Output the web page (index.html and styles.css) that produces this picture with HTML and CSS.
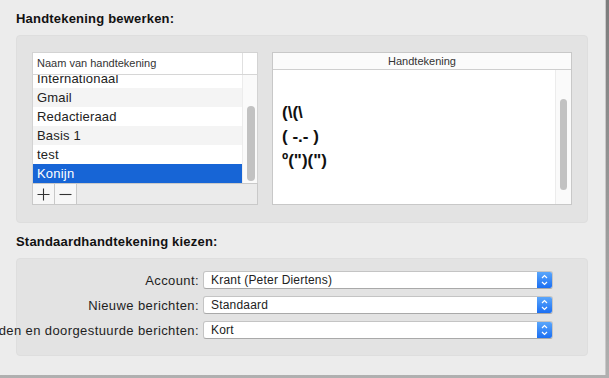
FILE: index.html
```html
<!DOCTYPE html>
<html lang="nl">
<head>
  <meta charset="UTF-8">
  <title>Handtekeningen</title>
  <link rel="stylesheet" href="styles.css">
</head>
<body>
  <div class="window">
    <h2 class="section-title">Handtekening bewerken:</h2>
    <div class="group edit-group">
      <div class="sig-list">
        <div class="list-header">
          <span class="col-name">Naam van handtekening</span>
          <span class="col-pad"></span>
        </div>
        <div class="list-body">
          <div class="rows">
            <div class="row">Internationaal</div>
            <div class="row alt">Gmail</div>
            <div class="row">Redactieraad</div>
            <div class="row alt">Basis 1</div>
            <div class="row">test</div>
            <div class="row selected">Konijn</div>
          </div>
          <div class="scroller list-scroller"><div class="thumb"></div></div>
        </div>
        <div class="list-buttons">
          <button class="sq-btn" aria-label="Toevoegen">
            <svg width="13" height="13" viewBox="0 0 13 13"><path d="M6.5 0.5v12M0.5 6.5h12" stroke="#333" stroke-width="1.1" fill="none"/></svg>
          </button>
          <button class="sq-btn" aria-label="Verwijderen">
            <svg width="13" height="13" viewBox="0 0 13 13"><path d="M0.5 6.5h12" stroke="#333" stroke-width="1.1" fill="none"/></svg>
          </button>
        </div>
      </div>

      <div class="sig-preview">
        <div class="preview-header">Handtekening</div>
        <div class="preview-body">
          <div class="preview-text">
            <div>(\(\</div>
            <div>( -.- )</div>
            <div>º(")(")</div>
          </div>
          <div class="scroller preview-scroller"><div class="thumb"></div></div>
        </div>
      </div>
    </div>

    <h2 class="section-title">Standaardhandtekening kiezen:</h2>
    <div class="group choose-group">
      <div class="form-row">
        <label class="form-label">Account:</label>
        <div class="popup"><span>Krant (Peter Diertens)</span><span class="stepper"></span></div>
      </div>
      <div class="form-row">
        <label class="form-label">Nieuwe berichten:</label>
        <div class="popup"><span>Standaard</span><span class="stepper"></span></div>
      </div>
      <div class="form-row">
        <label class="form-label">Antwoorden en doorgestuurde berichten:</label>
        <div class="popup"><span>Kort</span><span class="stepper"></span></div>
      </div>
    </div>
  </div>
</body>
</html>
```

FILE: styles.css
```css
/* Base */
html, body {
  margin: 0;
  width: 100%;
  height: 100%;
  overflow: hidden;
}

body {
  font-family: "Liberation Sans", Arial, sans-serif;
  color: #1e1e1e;
  background: linear-gradient(180deg, #7c7c7c, #b0b0b0);
}

.window {
  width: 606px;
  height: 375px;
  box-sizing: border-box;
  background: #ececec;
  border-right: 1px solid #c9c9c9;
  padding: 11px 0 0 16px;
}

.section-title {
  margin: 0 0 8px;
  font-size: 13px;
  line-height: 16px;
  font-weight: bold;
  letter-spacing: 0.2px;
  color: #111;
}

.group {
  width: 572px;
  box-sizing: border-box;
  background: #e3e3e3;
  border: 1px solid #dedede;
  border-radius: 4px;
}

/* Edit group */
.edit-group {
  display: flex;
  gap: 14px;
  padding: 16px 15px 17px 15px;
  margin-bottom: 11px;
}

.sig-list {
  width: 226px;
  display: flex;
  flex-direction: column;
}

.list-header {
  display: flex;
  height: 21px;
  background: #fff;
  border: 1px solid #d3d3d3;
  border-bottom-color: #d6d6d6;
  box-sizing: content-box;
}

.col-name {
  flex: 1;
  font-size: 11px;
  line-height: 21px;
  padding-left: 4px;
  color: #333;
  border-right: 1px solid #e0e0e0;
}

.col-pad {
  width: 14px;
}

.list-body {
  display: flex;
  height: 108px;
  background: #fff;
  border-left: 1px solid #d3d3d3;
  border-right: 1px solid #d3d3d3;
  overflow: hidden;
}

.rows {
  flex: 1;
  margin-top: -6px;
}

.row {
  height: 19px;
  line-height: 19px;
  font-size: 13px;
  letter-spacing: 0.2px;
  padding-left: 4px;
  color: #222;
}

.row.alt {
  background: #f4f4f4;
}

.row.selected {
  background: #1765d6;
  color: #fff;
}

.scroller {
  background: #fafafa;
  border-left: 1px solid #ececec;
  box-sizing: border-box;
}

.list-scroller {
  width: 15px;
  padding: 31px 2px 0 4px;
}

.thumb {
  background: #c2c2c2;
  border-radius: 4px;
}

.list-scroller .thumb {
  height: 75px;
}

.list-buttons {
  display: flex;
  height: 20px;
  background: #ebebeb;
  border: 1px solid #c9c9c9;
}

.sq-btn {
  width: 22px;
  height: 20px;
  padding: 0;
  margin: 0;
  border: none;
  border-right: 1px solid #c9c9c9;
  background: #f7f7f7;
  display: flex;
  align-items: center;
  justify-content: center;
}

/* Preview */
.sig-preview {
  width: 300px;
  height: 153px;
  display: flex;
  flex-direction: column;
  background: #fff;
  border: 1px solid #c8c8c8;
  box-sizing: border-box;
}

.preview-header {
  height: 16px;
  line-height: 16px;
  text-align: center;
  font-size: 11px;
  color: #333;
  border-bottom: 1px solid #cfcfcf;
  background: #fbfbfb;
}

.preview-body {
  flex: 1;
  display: flex;
}

.preview-text {
  flex: 1;
  padding: 31px 0 0 9px;
  font-size: 17px;
  line-height: 24px;
  font-weight: bold;
  color: #111;
}

.preview-scroller {
  width: 16px;
  padding: 29px 4px 0 4px;
}

.preview-scroller .thumb {
  height: 91px;
}

/* Choose group */
.choose-group {
  height: 98px;
  padding-top: 12px;
  display: flex;
  flex-direction: column;
  gap: 7px;
}

.form-row {
  display: flex;
  align-items: center;
  height: 18px;
  margin-left: -16px;
}

.form-label {
  width: 202px;
  flex: none;
  display: flex;
  justify-content: flex-end;
  white-space: nowrap;
  font-size: 13px;
  letter-spacing: 0.4px;
  color: #1e1e1e;
  padding-right: 4px;
  box-sizing: border-box;
}

.popup {
  width: 350px;
  height: 18px;
  display: flex;
  background: #fff;
  border: 1px solid #c4c4c4;
  border-bottom-color: #a9a9a9;
  border-radius: 3px;
  box-sizing: border-box;
  overflow: hidden;
  font-size: 12px;
  letter-spacing: 0.2px;
}

.popup span:first-child {
  flex: 1;
  padding-left: 7px;
  line-height: 16px;
  color: #222;
}

.stepper {
  width: 15px;
  background:
    url("data:image/svg+xml,%3Csvg xmlns='http://www.w3.org/2000/svg' width='15' height='17'%3E%3Cpath d='M5 6.5l2.5-2.5 2.5 2.5M5 10.5l2.5 2.5 2.5-2.5' stroke='white' stroke-width='1.2' fill='none'/%3E%3C/svg%3E") center / 15px 17px no-repeat,
    linear-gradient(180deg, #5aa6fb, #1b6ff3);
}
```
